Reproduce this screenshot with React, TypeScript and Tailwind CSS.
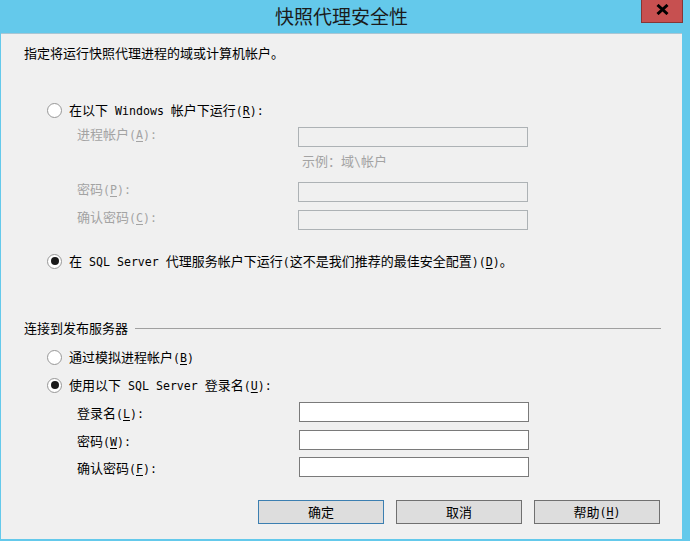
import type { ReactNode } from "react";

// SimSun-like mix: CJK at 13px, half-width runs in a monospace at ~7px pitch
function Txt({ s }: { s: string }) {
  const runs = s.split(/([\x20-\x7e]+)/).filter((r) => r.length > 0);
  return (
    <>
      {runs.map((run, i) => {
        if (!/^[\x20-\x7e]+$/.test(run)) return <span key={i}>{run}</span>;
        const bits = run.split(/&(.)/);
        const out: ReactNode[] = bits.map((b, j) =>
          j % 2 === 1 ? (
            <u key={j} className="underline underline-offset-[2px]">
              {b}
            </u>
          ) : (
            b
          )
        );
        return (
          <span
            key={i}
            className="font-['DejaVu_Sans_Mono',monospace] text-[11.6px] whitespace-pre"
          >
            {out}
          </span>
        );
      })}
    </>
  );
}

function Radio({
  checked,
  label,
  className = "",
}: {
  checked?: boolean;
  label: string;
  className?: string;
}) {
  return (
    <div className={`flex items-center h-[20px] ${className}`}>
      <div className="ml-[46px] w-[15px] h-[15px] rounded-full border border-[#979797] bg-white flex items-center justify-center">
        {checked && <div className="w-[8px] h-[8px] rounded-full bg-[#1a1a1a]" />}
      </div>
      <div className="ml-[7px] leading-[20px] text-black">
        <Txt s={label} />
      </div>
    </div>
  );
}

function Field({
  label,
  disabled,
  className = "",
}: {
  label: string;
  disabled?: boolean;
  className?: string;
}) {
  return (
    <div className={`flex items-center h-[20px] ${className}`}>
      <div
        className={
          disabled
            ? "ml-[76px] w-[221px] leading-[20px] text-[#a3a3a3] -mt-[6px]"
            : "ml-[76px] w-[222px] leading-[20px] text-black mt-[2px]"
        }
      >
        <Txt s={label} />
      </div>
      <div
        className={
          disabled
            ? "w-[230px] h-[20px] border border-[#adb2b5] bg-[#f0f0f0]"
            : "w-[230px] h-[20px] border border-[#7a7a7a] bg-white"
        }
      />
    </div>
  );
}

function Btn({ label, primary }: { label: string; primary?: boolean }) {
  return (
    <div
      className={`w-[126px] h-[24px] flex items-center justify-center bg-[#dddddd] border ${
        primary ? "border-[#3c7fb1]" : "border-[#707070]"
      } text-black leading-[20px]`}
    >
      <Txt s={label} />
    </div>
  );
}

export default function App() {
  return (
    <div className="w-[690px] h-[541px] bg-[#64c9eb] flex flex-col font-['Noto_Sans_CJK_SC',sans-serif] text-[13px] overflow-hidden">
      <div className="relative h-[33px] flex-none flex items-center justify-center pl-[1px] pr-[8px]">
        <div className="text-[19px] leading-[24px] text-[#1b1b1b] -mt-[1px]">快照代理安全性</div>
        <div className="absolute right-[7px] top-0 w-[42px] h-[23px] bg-[#c75050] border border-t-0 border-[#843636] flex justify-center pt-[4px]">
          <svg width="13" height="11" viewBox="0 0 13 11">
            <path d="M1.5 1 L11.5 10 M11.5 1 L1.5 10" stroke="#000" strokeWidth="3" />
          </svg>
        </div>
      </div>

      <div className="flex-1 ml-[1px] mr-[8px] mb-[2px] bg-[#f0f0f0] border-t border-[#a9c6d4] flex flex-col">
        <div className="mt-[9px] h-[20px] leading-[20px] pl-[23px] text-black">
          <Txt s="指定将运行快照代理进程的域或计算机帐户。" />
        </div>

        <Radio className="mt-[37px]" label="在以下 Windows 帐户下运行(&R):" />
        <Field className="mt-[7px]" disabled label="进程帐户(&A):" />
        <div className="mt-[4px] h-[20px] leading-[20px] pl-[301px] text-[#a3a3a3]">
          <Txt s="示例：域\帐户" />
        </div>
        <Field className="mt-[11px]" disabled label="密码(&P):" />
        <Field className="mt-[8px]" disabled label="确认密码(&C):" />

        <Radio
          className="mt-[21px]"
          checked
          label="在 SQL Server 代理服务帐户下运行(这不是我们推荐的最佳安全配置)(&D)。"
        />

        <div className="mt-[47px] h-[20px] flex items-center pl-[23px]">
          <span className="leading-[20px] text-black">连接到发布服务器</span>
          <div className="flex-1 h-px bg-[#a0a0a0] ml-[7px] mr-[21px] mt-[1px]" />
        </div>

        <Radio className="mt-[9px]" label="通过模拟进程帐户(&B)" />
        <Radio className="mt-[8px]" checked label="使用以下 SQL Server 登录名(&U):" />
        <Field className="mt-[7px]" label="登录名(&L):" />
        <Field className="mt-[8px]" label="密码(&W):" />
        <Field className="mt-[7px]" label="确认密码(&F):" />

        <div className="mt-[23px] flex justify-end gap-[12px] pr-[22px]">
          <Btn primary label="确定" />
          <Btn label="取消" />
          <Btn label="帮助(&H)" />
        </div>
      </div>
    </div>
  );
}
